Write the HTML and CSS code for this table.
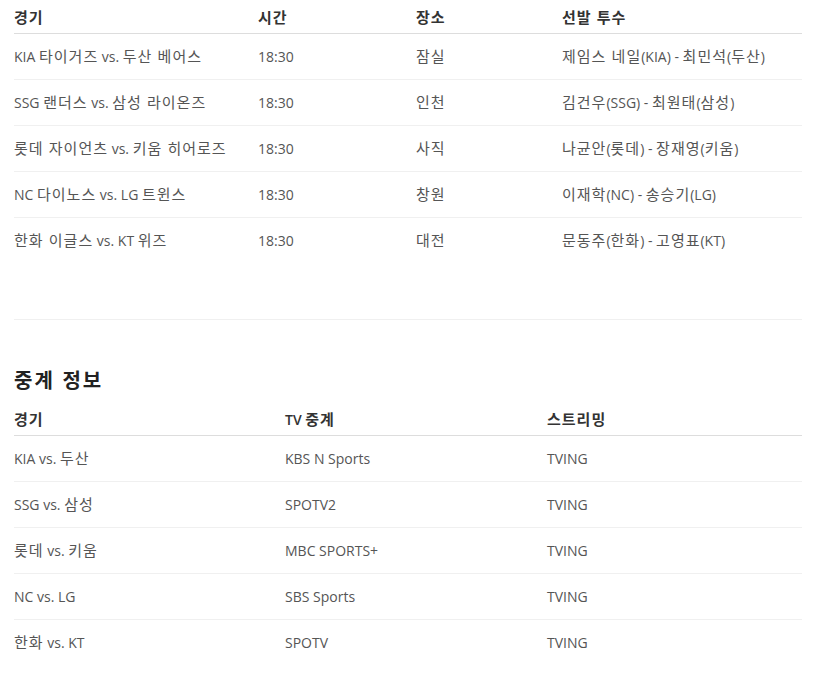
FILE: index.html
```html
<!DOCTYPE html>
<html lang="ko">
<head>
<meta charset="utf-8">
<title>KBO 경기 정보</title>
<link rel="stylesheet" href="styles.css">
</head>
<body>
<div class="page">
  <section class="block block-games">
    <table class="tbl tbl-games">
      <thead>
        <tr><th class="c-match"><span class="ko">경기</span></th><th class="c-time"><span class="ko">시간</span></th><th class="c-place"><span class="ko">장소</span></th><th class="c-pitch"><span class="ko">선발 투수</span></th></tr>
      </thead>
      <tbody>
        <tr><td>KIA <span class="ko">타이거즈</span> vs. <span class="ko">두산 베어스</span></td><td>18:30</td><td><span class="ko">잠실</span></td><td><span class="ko">제임스 네일</span>(KIA) - <span class="ko">최민석</span>(<span class="ko">두산</span>)</td></tr>
        <tr><td>SSG <span class="ko">랜더스</span> vs. <span class="ko">삼성 라이온즈</span></td><td>18:30</td><td><span class="ko">인천</span></td><td><span class="ko">김건우</span>(SSG) - <span class="ko">최원태</span>(<span class="ko">삼성</span>)</td></tr>
        <tr><td><span class="ko">롯데 자이언츠</span> vs. <span class="ko">키움 히어로즈</span></td><td>18:30</td><td><span class="ko">사직</span></td><td><span class="ko">나균안</span>(<span class="ko">롯데</span>) - <span class="ko">장재영</span>(<span class="ko">키움</span>)</td></tr>
        <tr><td>NC <span class="ko">다이노스</span> vs. LG <span class="ko">트윈스</span></td><td>18:30</td><td><span class="ko">창원</span></td><td><span class="ko">이재학</span>(NC) - <span class="ko">송승기</span>(LG)</td></tr>
        <tr><td><span class="ko">한화 이글스</span> vs. KT <span class="ko">위즈</span></td><td>18:30</td><td><span class="ko">대전</span></td><td><span class="ko">문동주</span>(<span class="ko">한화</span>) - <span class="ko">고영표</span>(KT)</td></tr>
      </tbody>
    </table>
  </section>
  <section class="block block-tv">
    <h2 class="block-title">중계 정보</h2>
    <table class="tbl tbl-tv">
      <thead>
        <tr><th class="c-game"><span class="ko">경기</span></th><th class="c-tv">TV <span class="ko">중계</span></th><th class="c-stream"><span class="ko">스트리밍</span></th></tr>
      </thead>
      <tbody>
        <tr><td>KIA vs. <span class="ko">두산</span></td><td>KBS N Sports</td><td>TVING</td></tr>
        <tr><td>SSG vs. <span class="ko">삼성</span></td><td>SPOTV2</td><td>TVING</td></tr>
        <tr><td><span class="ko">롯데</span> vs. <span class="ko">키움</span></td><td>MBC SPORTS+</td><td>TVING</td></tr>
        <tr><td>NC vs. LG</td><td>SBS Sports</td><td>TVING</td></tr>
        <tr><td><span class="ko">한화</span> vs. KT</td><td>SPOTV</td><td>TVING</td></tr>
      </tbody>
    </table>
  </section>
</div>
</body>
</html>
```
FILE: styles.css
```css
html, body {
  margin: 0;
  padding: 0;
  background: #ffffff;
}
body {
  font-family: "Open Sans", "Noto Sans CJK KR", sans-serif;
  font-size: 14px;
  color: #555555;
}
.page {
  width: 788px;
  padding: 2px 0 0 14px;
}
.ko {
  font-family: "Noto Sans CJK KR", sans-serif;
  font-size: 15px;
  line-height: 16px;
  letter-spacing: 1px;
}
.block-games {
  padding-bottom: 56px;
  border-bottom: 1px solid #f0f0f0;
}
.block-tv {
  padding-top: 46px;
}
.block-title {
  margin: 0 0 10px;
  font-family: "Noto Sans CJK KR", sans-serif;
  font-size: 20px;
  line-height: 28px;
  font-weight: 700;
  letter-spacing: 2px;
  color: #222222;
}
.tbl {
  width: 100%;
  border-collapse: collapse;
  table-layout: fixed;
}
.tbl th {
  text-align: left;
  font-weight: 600;
  color: #333333;
  padding: 5px 0;
  height: 21px;
  line-height: 21px;
  border-bottom: 1px solid #dddddd;
}
.tbl td {
  padding: 12px 0;
  height: 21px;
  line-height: 21px;
  border-bottom: 1px solid #f0f0f0;
  white-space: nowrap;
}
.tbl tbody tr:last-child td {
  border-bottom: none;
}
.c-match { width: 244px; }
.c-time { width: 158px; }
.c-place { width: 146px; }
.c-pitch { width: auto; }
.c-game { width: 271px; }
.c-tv { width: 262px; }
.c-stream { width: auto; }
```
